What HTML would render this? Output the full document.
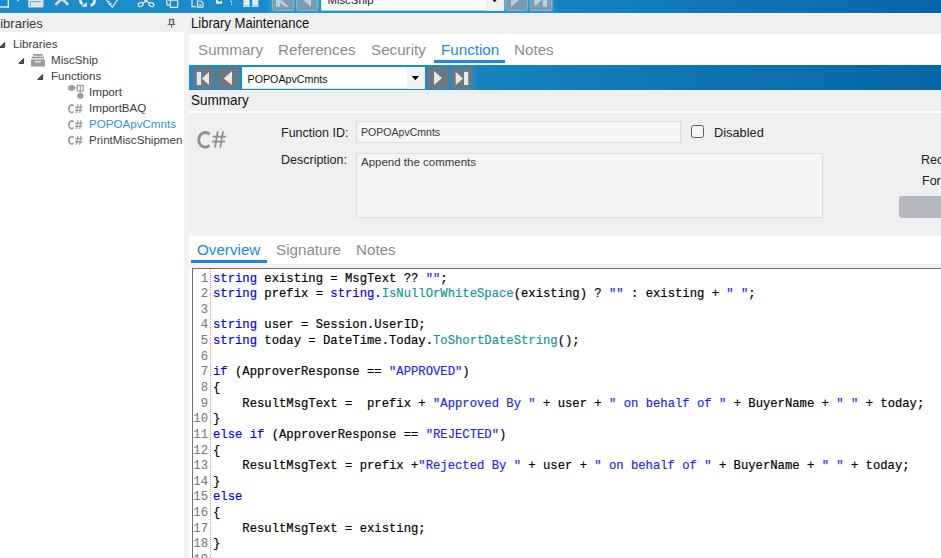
<!DOCTYPE html>
<html><head><meta charset="utf-8">
<style>
*{margin:0;padding:0;box-sizing:border-box}
html,body{width:941px;height:558px;overflow:hidden;background:#fff;font-family:"Liberation Sans",sans-serif;position:relative}
.abs{position:absolute}
#tb{left:0;top:0;width:941px;height:13px;background:linear-gradient(90deg,#1b8cc9 0px,#1b8cc9 554px,#1683c0 560px,#0665a6 941px)}
#tbnav{left:268px;top:0;width:286px;height:13px;background:#2196d3}
.tbb{position:absolute;top:0;width:22px;height:11px;background:#7d9aab;border-radius:0 0 3px 3px}
#tbcombo{left:321px;top:0;width:183px;height:11px;background:#fff}
#tbdrop{left:486px;top:0;width:18px;height:11px;background:#f0f0f0}
#tbline{left:0;top:13px;width:941px;height:1px;background:#f9f6f4}
#lhdr{left:0;top:14px;width:184px;height:18px;background:#efefef}
#lhdr span{position:absolute;left:-7px;top:2px;font-size:13px;color:#3a3a3a}
#ltree{left:0;top:33px;width:184px;height:525px;background:#fff;font-size:11.6px;color:#3c3c3c;overflow:hidden}
#ltree .t{position:absolute;white-space:nowrap}
#split{left:184px;top:14px;width:5px;height:545px;background:#f2f2f2}
#mhdr{left:189px;top:14px;width:752px;height:20px;background:#efefef}
#mhdr span{position:absolute;left:2px;top:1px;font-size:14px;color:#111;transform:scaleX(0.932);transform-origin:0 0;white-space:nowrap}
#tabs{left:189px;top:34px;width:752px;height:31px;background:#fff}
.tab{position:absolute;top:7px;font-size:15.5px;color:#8c8c8c;white-space:nowrap;transform:scaleX(0.98);transform-origin:0 0}
#nav{left:189px;top:65px;width:752px;height:25px;background:linear-gradient(90deg,#1b8cc9 0px,#1b8cc9 287px,#1683c0 288px,#0665a6 752px)}
.nb{position:absolute;top:2px;width:22px;height:22px;background:#6c7a85;border-radius:4px}
#combo{left:242px;top:67px;width:183px;height:22px;background:#fff}
#combo span{position:absolute;left:6px;top:4px;font-size:12px;color:#111}
#drop{left:407px;top:67px;width:18px;height:22px;background:#f2f2f2}
#shdr{left:189px;top:90px;width:752px;height:21px;background:#efefef}
#shdr span{position:absolute;left:2px;top:2px;font-size:14px;color:#111;transform:scaleX(0.965);transform-origin:0 0;white-space:nowrap}
#wline{left:189px;top:111px;width:752px;height:2px;background:#fff}
#gpanel{left:189px;top:113px;width:752px;height:118px;background:#efefef;font-size:12.5px;color:#222}
#gpanel .t{position:absolute;white-space:nowrap}
#gap{left:189px;top:231px;width:752px;height:5px;background:#f3f3f3}
#otabs{left:189px;top:236px;width:752px;height:28px;background:#fff}
#ostrip{left:189px;top:264px;width:752px;height:4px;background:#f2f2f2}
#editor{left:192px;top:268px;width:760px;height:300px;background:#fff;border-top:1px solid #707070;border-left:1px solid #707070}
#dots{left:210px;top:269px;width:1px;height:290px;background-image:linear-gradient(#a8a8a8 50%,transparent 50%);background-size:1px 2px}
#code{left:192px;top:271.5px;font-family:"Liberation Mono",monospace;font-size:12.22px;color:#000;-webkit-text-stroke:0.18px currentColor}
.cl{position:relative;height:15.65px;line-height:15.65px}
.ln{position:absolute;left:0;width:16px;text-align:right;color:#7a7a7a;-webkit-text-stroke:0.1px currentColor}
.tx{position:absolute;left:21px;white-space:pre}
.kw{color:#0000ff}
.st{color:#2525f5}
.mt{color:#1396a0}
</style></head><body>
<div id="tb" class="abs"></div>
<div id="tbnav" class="abs"></div>
<svg class="abs" style="left:0;top:0" width="941" height="13">
  <g fill="none" stroke="#e4e4e4" stroke-width="1.4">
    <path d="M-2 7 H8.3 V-2"/>
  </g>
  <rect x="17.5" y="0" width="1.2" height="1.2" fill="#fff"/>
  <path d="M28.2 -2 V6 Q28.2 7.5 29.7 7.5 H42 Q43.5 7.5 43.5 6 V-2 Z" fill="#e3e3e3"/>
  <path d="M30.3 6 V1.6 H41" fill="none" stroke="#7fb0d6" stroke-width="1.1"/>
  <path d="M55.5 4.8 L61.8 -1.2 L68.2 4.8" fill="none" stroke="#d6d6d6" stroke-width="2.8"/>
  <path d="M80.2 -1 Q80 2.5 82.5 4.2" fill="none" stroke="#eeeeee" stroke-width="2.6"/>
  <path d="M81 6.8 L86.8 6.8 L86.8 2.2 Z" fill="#eeeeee"/>
  <path d="M94.5 -1 Q95 4.5 90.3 5.6" fill="none" stroke="#eeeeee" stroke-width="2.6"/>
  <circle cx="90.6" cy="5" r="0.6" fill="#1b8cc9"/>
  <g fill="none" stroke="#e8e8e8" stroke-width="1.2">
    <path d="M106.3 -0.5 Q108 3 112.4 7.2 L117.8 -0.5"/>
    <path d="M108.5 1.5 h1.5 M110 3.6 h1.5"/>
    <ellipse cx="140.6" cy="4.6" rx="2.5" ry="1.9" transform="rotate(-25 140.6 4.6)"/>
    <ellipse cx="151.4" cy="4.6" rx="2.5" ry="1.9" transform="rotate(25 151.4 4.6)"/>
    <path d="M142.8 3.3 L149.5 -1.5 M149.2 3.3 L142.5 -1.5"/>
    <path d="M166.8 -1 V4.2 Q166.8 5.2 168 5.2 H170"/><path d="M169 -1 V1"/>
    <rect x="170.3" y="0.2" width="7.4" height="7.2" rx="0.5"/>
    <path d="M192 -1 V6.6 H196"/>
    <path d="M197.5 7.2 V1 H201 L203 3 V7.2 Z"/>
    <path d="M199 4.3 h2.5 M199 5.8 h2.5" stroke-width="0.8"/>
  </g>
  <path d="M216 -1 L219.5 2 L222 0.5 V3.8 H216 Z" fill="#ececec"/>
  <path d="M229.5 -1 L231.8 1.5 L230.8 5 L232.2 5 Z" fill="#ececec"/>
  <g fill="#eeeeee">
    <rect x="243.5" y="-1" width="6" height="6.4"/>
    <rect x="243" y="5.6" width="7" height="1.2"/>
    <rect x="252.3" y="-1" width="6" height="6.4"/>
    <rect x="251.8" y="5.6" width="7" height="1.2"/>
  </g>
  <g fill="#c9dbe6"><rect x="245.6" y="-1" width="0.8" height="6.4"/><rect x="254.4" y="-1" width="0.8" height="6.4"/></g>
  <g fill="#7b9cb0" stroke="#9fbdd0" stroke-width="0.8">
    <path d="M272.4 -2 V8.6 Q272.4 10.6 274.4 10.6 H291.8 Q293.8 10.6 293.8 8.6 V-2 Z"/>
    <path d="M296.4 -2 V8.6 Q296.4 10.6 298.4 10.6 H316 Q318 10.6 318 8.6 V-2 Z"/>
    <path d="M505.8 -2 V8.6 Q505.8 10.6 507.8 10.6 H525.6 Q527.6 10.6 527.6 8.6 V-2 Z"/>
    <path d="M530.2 -2 V8.6 Q530.2 10.6 532.2 10.6 H550 Q552 10.6 552 8.6 V-2 Z"/>
  </g>
  <g fill="#bccfda">
    <rect x="276" y="-1" width="4.2" height="7.8"/>
    <path d="M280.2 -1 L288.6 6.8 H284.8 L280.2 2.6 Z"/>
    <path d="M302 -1 L311 6.8 H311 V-1 Z"/>
    <path d="M511 6.8 L520.5 -1 H511 Z"/>
    <path d="M534.4 6.8 L542.8 -1 H534.4 Z"/>
    <rect x="542.8" y="-1" width="4.2" height="7.8"/>
  </g>
  <rect x="321.2" y="-1" width="183" height="11.6" fill="#fff"/>
  <rect x="486" y="-1" width="18" height="11.6" fill="#f1f1f1"/>
  <path d="M492.2 -0.5 L497 -0.5 L494.6 2.2 Z" fill="#000"/>
  <text x="327.4" y="4.4" font-family="Liberation Sans" font-size="11.4" fill="#222">MiscShip</text>
</svg>
<div id="tbline" class="abs"></div>
<div id="lhdr" class="abs"><span>Libraries</span>
<svg class="abs" style="left:0;top:-1px" width="184" height="20">
  <g fill="#6a6a6a">
    <rect x="168.9" y="5.8" width="5.3" height="1.4"/>
    <rect x="168.9" y="5.8" width="1.4" height="5.5"/>
    <rect x="172.6" y="5.8" width="1.6" height="5.5"/>
    <rect x="167.7" y="11" width="7.5" height="1.1"/>
    <rect x="171" y="12" width="1.1" height="2.9"/>
  </g>
</svg></div>
<div id="ltree" class="abs">
  <svg class="abs" style="left:0;top:0" width="184" height="120">
    <g fill="#5a5a5a" stroke="#262626" stroke-width="0.9" stroke-linejoin="round">
      <path d="M4.6 9.6 L4.6 14.4 L-0.2 14.4 Z"/>
      <path d="M23.6 25.6 L23.6 30.4 L18.8 30.4 Z"/>
      <path d="M42.6 41.6 L42.6 46.4 L37.8 46.4 Z"/>
    </g>
    <g fill="#9b9b9b">
      <rect x="33.3" y="21" width="9.4" height="1.8"/>
      <rect x="32" y="23.6" width="12" height="1.8"/>
      <rect x="31" y="26.5" width="14" height="7"/>
      <rect x="35" y="28.2" width="5.8" height="1.2" fill="#fff"/>
      <ellipse cx="71.5" cy="54.9" rx="3.4" ry="2.9"/>
      <rect x="74" y="54.5" width="3" height="1"/>
      <rect x="77.4" y="52.4" width="5.8" height="5.6" fill="none" stroke="#9b9b9b" stroke-width="1.2"/>
      <rect x="79.7" y="53" width="1.2" height="4.5"/>
      <rect x="79.8" y="58" width="1" height="2"/>
      <ellipse cx="80.4" cy="62.8" rx="3.3" ry="2.9"/>
    </g>
    <g fill="none" stroke="#a0a0a0">
      <path d="M73.6 73.03 A2.75 3.8 0 1 0 73.6 78.47" stroke-width="1.7"/>
      <path d="M77.8 71.35 L76.5 80.15 M81 71.35 L79.7 80.15 M75.2 74.05 H82.8 M74.8 77.35 H82.4" stroke-width="1.35"/>
      <path d="M73.6 89.03 A2.75 3.8 0 1 0 73.6 94.47" stroke-width="1.7"/>
      <path d="M77.8 87.35 L76.5 96.15 M81 87.35 L79.7 96.15 M75.2 90.05 H82.8 M74.8 93.35 H82.4" stroke-width="1.35"/>
      <path d="M73.6 104.63 A2.75 3.8 0 1 0 73.6 110.07" stroke-width="1.7"/>
      <path d="M77.8 102.95 L76.5 111.75 M81 102.95 L79.7 111.75 M75.2 105.65 H82.8 M74.8 108.95 H82.4" stroke-width="1.35"/>
    </g>
  </svg>
  <span class="t" style="left:13px;top:4px">Libraries</span>
  <span class="t" style="left:51px;top:20px">MiscShip</span>
  <span class="t" style="left:51px;top:36px">Functions</span>
  <span class="t" style="left:89px;top:52px">Import</span>
  <span class="t" style="left:89px;top:68px">ImportBAQ</span>
  <span class="t" style="left:89px;top:84px;color:#2a92e0">POPOApvCmnts</span>
  <span class="t" style="left:89px;top:100px">PrintMiscShipmen</span>
</div>
<div id="split" class="abs"></div>
<div id="mhdr" class="abs"><span>Library Maintenance</span></div>
<div id="tabs" class="abs">
  <span class="tab" style="left:9px">Summary</span>
  <span class="tab" style="left:89px">References</span>
  <span class="tab" style="left:182px">Security</span>
  <span class="tab" style="left:252px;color:#1b8ad8">Function</span>
  <span class="tab" style="left:325px">Notes</span>
  <div class="abs" style="left:245px;top:26px;width:71px;height:3px;background:#1c89e0"></div>
</div>
<div id="nav" class="abs"></div>
<svg class="abs" style="left:0;top:0" width="941" height="95">
  <g fill="#6c7880">
    <rect x="193.1" y="67.1" width="21.7" height="21.7" rx="3.2"/>
    <rect x="217.2" y="67.1" width="21.6" height="21.7" rx="3.2"/>
    <rect x="427.2" y="67.1" width="21.5" height="21.7" rx="3.2"/>
    <rect x="451.2" y="67.1" width="21.5" height="21.7" rx="3.2"/>
  </g>
  <g fill="#e8e8e8">
    <rect x="196.8" y="71.9" width="4.3" height="13.1"/>
    <path d="M201.9 78.5 L209 71.9 V85 Z"/>
    <path d="M223.7 78.5 L232 70.9 V85.1 Z"/>
    <path d="M442 78 L434 71.1 V85 Z"/>
    <path d="M463.1 78.5 L455.7 71.9 V85 Z"/>
    <rect x="464" y="71.9" width="4.2" height="13.1"/>
  </g>
  <rect x="242.1" y="67.1" width="182.7" height="21.7" fill="#fff"/>
  <rect x="407" y="67.1" width="17.8" height="21.7" fill="#f3f3f3"/>
  <path d="M411.7 75.9 H419 L415.35 80.2 Z" fill="#000"/>
</svg>
<span class="abs" style="left:247.5px;top:73px;font-size:10.7px;color:#111;white-space:nowrap">POPOApvCmnts</span>
<div id="shdr" class="abs"><span>Summary</span></div>
<div id="wline" class="abs"></div>
<div id="gpanel" class="abs">
  <svg class="abs" style="left:0;top:0" width="60" height="50">
    <g transform="translate(-189,-113)" fill="none" stroke="#8f8f8f">
      <path d="M209.6 134.3 A6.6 7.3 0 1 0 209.6 145.3" stroke-width="2.8"/>
      <path d="M217.7 131.3 L215 147.6 M223 131.3 L220.2 147.6 M212.8 136.6 H226 M212.2 141.7 H225.2" stroke-width="1.8"/>
    </g>
  </svg>
  <span class="t" style="left:92px;top:13px">Function ID:</span>
  <span class="t" style="left:92px;top:40px">Description:</span>
  <div class="abs" style="left:167px;top:8px;width:325px;height:22px;background:#f4f4f4;border:1px solid #dedede"></div>
  <span class="t" style="left:172px;top:13px;font-size:10.55px;color:#3a3a3a">POPOApvCmnts</span>
  <div class="abs" style="left:167px;top:40px;width:467px;height:65px;background:#f4f4f4;border:1px solid #dedede"></div>
  <span class="t" style="left:172px;top:43px;font-size:11.5px;color:#3a3a3a">Append the comments</span>
  <div class="abs" style="left:502px;top:12px;width:13.4px;height:13.4px;border:1.3px solid #5a5a5a;border-radius:2.5px;background:#f4f4f4"></div>
  <span class="t" style="left:525px;top:12px;font-size:12.8px">Disabled</span>
  <span class="t" style="left:732px;top:40px">Rec</span>
  <span class="t" style="left:733px;top:61px">For</span>
  <div class="abs" style="left:710px;top:83px;width:60px;height:21.5px;background:#b5b9bd;border-radius:3px"></div>
</div>
<div id="gap" class="abs"></div>
<div id="otabs" class="abs">
  <span class="tab" style="left:8px;top:5px;color:#1b8ad8">Overview</span>
  <span class="tab" style="left:87px;top:5px">Signature</span>
  <span class="tab" style="left:167px;top:5px">Notes</span>
  <div class="abs" style="left:2px;top:24px;width:76px;height:3px;background:#1c89e0"></div>
</div>
<div id="ostrip" class="abs"></div>
<div id="editor" class="abs"></div>
<div id="dots" class="abs"></div>
<div id="code" class="abs">
<div class="cl"><span class="ln">1</span><span class="tx"><span class="kw">string</span> existing = MsgText ?? <span class="st">&quot;&quot;</span>;</span></div>
<div class="cl"><span class="ln">2</span><span class="tx"><span class="kw">string</span> prefix = <span class="kw">string</span>.<span class="mt">IsNullOrWhiteSpace</span>(existing) ? <span class="st">&quot;&quot;</span> : existing + <span class="st">&quot; &quot;</span>;</span></div>
<div class="cl"><span class="ln">3</span><span class="tx"></span></div>
<div class="cl"><span class="ln">4</span><span class="tx"><span class="kw">string</span> user = Session.UserID;</span></div>
<div class="cl"><span class="ln">5</span><span class="tx"><span class="kw">string</span> today = DateTime.Today.<span class="mt">ToShortDateString</span>();</span></div>
<div class="cl"><span class="ln">6</span><span class="tx"></span></div>
<div class="cl"><span class="ln">7</span><span class="tx"><span class="kw">if</span> (ApproverResponse == <span class="st">&quot;APPROVED&quot;</span>)</span></div>
<div class="cl"><span class="ln">8</span><span class="tx">{</span></div>
<div class="cl"><span class="ln">9</span><span class="tx">    ResultMsgText =  prefix + <span class="st">&quot;Approved By &quot;</span> + user + <span class="st">&quot; on behalf of &quot;</span> + BuyerName + <span class="st">&quot; &quot;</span> + today;</span></div>
<div class="cl"><span class="ln">10</span><span class="tx">}</span></div>
<div class="cl"><span class="ln">11</span><span class="tx"><span class="kw">else if</span> (ApproverResponse == <span class="st">&quot;REJECTED&quot;</span>)</span></div>
<div class="cl"><span class="ln">12</span><span class="tx">{</span></div>
<div class="cl"><span class="ln">13</span><span class="tx">    ResultMsgText = prefix +<span class="st">&quot;Rejected By &quot;</span> + user + <span class="st">&quot; on behalf of &quot;</span> + BuyerName + <span class="st">&quot; &quot;</span> + today;</span></div>
<div class="cl"><span class="ln">14</span><span class="tx">}</span></div>
<div class="cl"><span class="ln">15</span><span class="tx"><span class="kw">else</span></span></div>
<div class="cl"><span class="ln">16</span><span class="tx">{</span></div>
<div class="cl"><span class="ln">17</span><span class="tx">    ResultMsgText = existing;</span></div>
<div class="cl"><span class="ln">18</span><span class="tx">}</span></div>
<div class="cl"><span class="ln">19</span><span class="tx"></span></div>
</div>
</body></html>
